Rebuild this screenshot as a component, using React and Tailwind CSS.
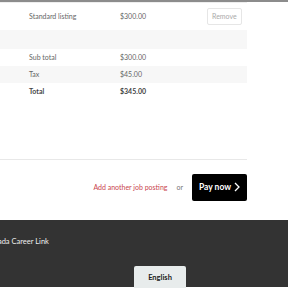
export default function App() {
  const font = { fontFamily: "Lato, 'Noto Sans', sans-serif" };
  return (
    <div className="w-[288px] h-[288px] overflow-hidden bg-white text-[#666]" style={font}>
      <div className="h-[2px] bg-[#8c8c8c]" />
      <div className="w-[247px] text-[7px]">
        <div className="flex items-center h-[28px] border-t border-[#eee]">
          <div className="w-[120px] pl-[29px]">Standard listing</div>
          <div className="w-[87px]">$300.00</div>
          <div className="border border-[#e6e6e6] rounded-[2px] px-[4px] h-[17px] flex items-center text-[#aaa] text-[7px]">Remove</div>
        </div>
        <div className="h-[19px] bg-[#f7f7f7]" />
        <div className="flex items-center h-[17px]">
          <div className="w-[120px] pl-[29px]">Sub total</div>
          <div>$300.00</div>
        </div>
        <div className="flex items-center h-[17px] bg-[#f7f7f7]">
          <div className="w-[120px] pl-[29px]">Tax</div>
          <div>$45.00</div>
        </div>
        <div className="flex items-center h-[17px] font-bold text-[#444]">
          <div className="w-[120px] pl-[29px]">Total</div>
          <div>$345.00</div>
        </div>
      </div>
      <div className="w-[247px] h-[60px] border-b border-[#e8e8e8]" />
      <div className="w-[247px] flex items-center justify-end h-[60px] pb-[6px]">
        <span className="text-[#c9454d] text-[7px]">Add another job posting</span>
        <span className="text-[#777] text-[7px] ml-[9px] mr-[9px]">or</span>
        <div className="bg-black text-white h-[27px] w-[55px] flex items-center justify-center gap-[3px] rounded-[2px] text-[8.5px] font-bold">
          Pay now
          <svg width="6" height="10" viewBox="0 0 6 10"><path d="M1 1l4 4-4 4" stroke="white" strokeWidth="1.3" fill="none" /></svg>
        </div>
      </div>
      <div className="bg-[#333] h-[67px] relative">
        <div className="pt-[16px] text-[#eee] text-[7.5px] -ml-[15px]">Canada Career Link</div>
        <div className="absolute left-[134px] top-[46px] w-[52px] h-[24px] bg-[#e8ecec] rounded-t-[2px] flex items-center justify-center text-[#222] text-[7.5px] font-bold">English</div>
      </div>
    </div>
  );
}
